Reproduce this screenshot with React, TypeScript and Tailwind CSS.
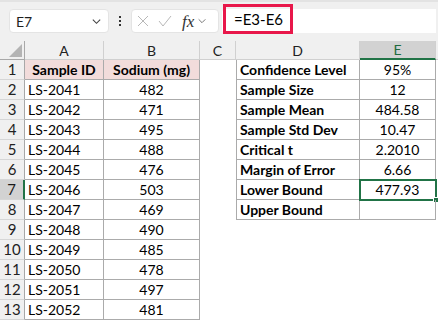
import React from 'react';

const F = { fontFamily: 'Lato, "Open Sans", sans-serif' };

const samples = [
  ['LS-2041', '482'],
  ['LS-2042', '471'],
  ['LS-2043', '495'],
  ['LS-2044', '488'],
  ['LS-2045', '476'],
  ['LS-2046', '503'],
  ['LS-2047', '469'],
  ['LS-2048', '490'],
  ['LS-2049', '485'],
  ['LS-2050', '478'],
  ['LS-2051', '497'],
  ['LS-2052', '481'],
];

const stats = [
  ['Confidence Level', '95%'],
  ['Sample Size', '12'],
  ['Sample Mean', '484.58'],
  ['Sample Std Dev', '10.47'],
  ['Critical t', '2.2010'],
  ['Margin of Error', '6.66'],
  ['Lower Bound', '477.93'],
  ['Upper Bound', ''],
];

const Chevron = ({ className }: { className?: string }) => (
  <svg viewBox="0 0 12 12" className={className} fill="none" stroke="currentColor" strokeWidth="1.2">
    <path d="M2 4l4 4 4-4" />
  </svg>
);

const App: React.FC = () => {
  const rows = Array.from({ length: 13 }, (_, i) => i + 1);

  return (
    <div className="w-[438px] h-[322px] overflow-hidden bg-white text-[14px] text-black" style={F}>
      {/* Formula bar */}
      <div className="h-[41px] bg-[#f0f0f0] border-t-2 border-[#e3e3e3] flex items-start pt-[7px] pl-[9px]">
        <div className="w-[100px] h-[24px] bg-white rounded-[4px] border border-[#e4e4e4] flex items-center justify-between pl-[6px] pr-[6px]">
          <span className="text-[14px] text-[#1f1f1f]">E7</span>
          <Chevron className="w-[11px] h-[11px] text-[#444]" />
        </div>
        <div className="w-[22px] h-[24px] flex flex-col items-center justify-center gap-[2px]">
          <span className="w-[2px] h-[2px] bg-[#333]" />
          <span className="w-[2px] h-[2px] bg-[#333]" />
          <span className="w-[2px] h-[2px] bg-[#333]" />
        </div>
        <div className="w-[88px] h-[24px] bg-white rounded-[4px] border border-[#e4e4e4] flex items-center pl-[5px] gap-[9px]">
          <svg viewBox="0 0 12 12" className="w-[12px] h-[12px] text-[#b8b8b8]" fill="none" stroke="currentColor" strokeWidth="1">
            <path d="M1 1l10 10M11 1L1 11" />
          </svg>
          <svg viewBox="0 0 14 12" className="w-[14px] h-[12px] text-[#b8b8b8]" fill="none" stroke="currentColor" strokeWidth="1">
            <path d="M1 6l4 5 8-10" />
          </svg>
          <div className="flex items-center gap-[3px] ml-[1px]">
            <span className="italic text-[17px] text-[#333] leading-none" style={{ fontFamily: '"Liberation Serif", serif' }}>fx</span>
            <Chevron className="w-[10px] h-[10px] text-[#777]" />
          </div>
        </div>
        <div className="relative flex-1 h-[24px] bg-white rounded-l-[4px] ml-[3px] mr-[2px]">
          <div className="absolute left-[1px] top-[-5px] w-[70px] h-[30px] border-[3px] border-[#e8174a] flex items-center pl-[8px]">
            <span className="text-[15px] text-black">=E3-E6</span>
          </div>
        </div>
      </div>

      {/* Grid */}
      <div className="grid grid-cols-[25px_79px_96px_36px_124px_76px_1fr] grid-rows-[19px_repeat(13,20px)]">
        {/* header row */}
        <div className="bg-[#f0f0f0] border-r border-b border-[#a8a8a8] relative overflow-hidden">
          <div className="absolute right-[2px] bottom-[2px] w-0 h-0 border-l-[13px] border-l-transparent border-b-[13px] border-b-[#b4b4b4]" />
        </div>
        {['A', 'B', 'C', 'D'].map((c) => (
          <div key={c} className="bg-[#f0f0f0] border-r border-b border-[#d0d0d0] flex items-center justify-center text-[14px] text-[#222]">
            {c}
          </div>
        ))}
        <div className="bg-[#d2d2d2] border-r border-[#d0d0d0] border-b-2 border-b-[#217346] flex items-center justify-center text-[14px] text-[#1e6b3f]">
          E
        </div>
        <div className="bg-[#f0f0f0] border-b border-[#d0d0d0]" />

        {rows.map((r) => {
          const sample = r >= 2 ? samples[r - 2] : null;
          const stat = r <= 8 ? stats[r - 1] : null;
          const selected = r === 7;
          return (
            <React.Fragment key={r}>
              <div
                className={`flex items-center justify-center text-[15px] border-b border-[#d6d6d6] ${
                  selected
                    ? 'bg-[#d2d2d2] border-r-2 border-r-[#217346] text-[#1a1a1a]'
                    : 'bg-[#f0f0f0] border-r border-r-[#a8a8a8] text-[#222]'
                }`}
              >
                {r}
              </div>
              {r === 1 ? (
                <>
                  <div className="bg-[#f2dcdb] border-r border-b border-[#ababab] flex items-center justify-center font-bold">
                    Sample ID
                  </div>
                  <div className="bg-[#f2dcdb] border-r border-b border-[#ababab] flex items-center justify-center font-bold">
                    Sodium (mg)
                  </div>
                </>
              ) : (
                <>
                  <div className="border-r border-b border-[#ababab] flex items-center pl-[3px]">{sample?.[0]}</div>
                  <div className="border-r border-b border-[#ababab] flex items-center justify-center">{sample?.[1]}</div>
                </>
              )}
              <div />
              {stat ? (
                <>
                  <div className="border-l border-r border-b border-[#ababab] flex items-center pl-[3px] font-bold">
                    {stat[0]}
                  </div>
                  <div
                    className={`relative border-r border-b border-[#ababab] flex items-center justify-center ${
                      selected ? 'outline-2 outline-[#217346] -outline-offset-1' : ''
                    }`}
                  >
                    {stat[1]}
                    {selected && (
                      <span className="absolute right-[-4px] bottom-[-4px] w-[6px] h-[6px] bg-[#217346] border border-white" />
                    )}
                  </div>
                </>
              ) : (
                <>
                  <div />
                  <div />
                </>
              )}
              <div />
            </React.Fragment>
          );
        })}
      </div>
    </div>
  );
};

export default App;
